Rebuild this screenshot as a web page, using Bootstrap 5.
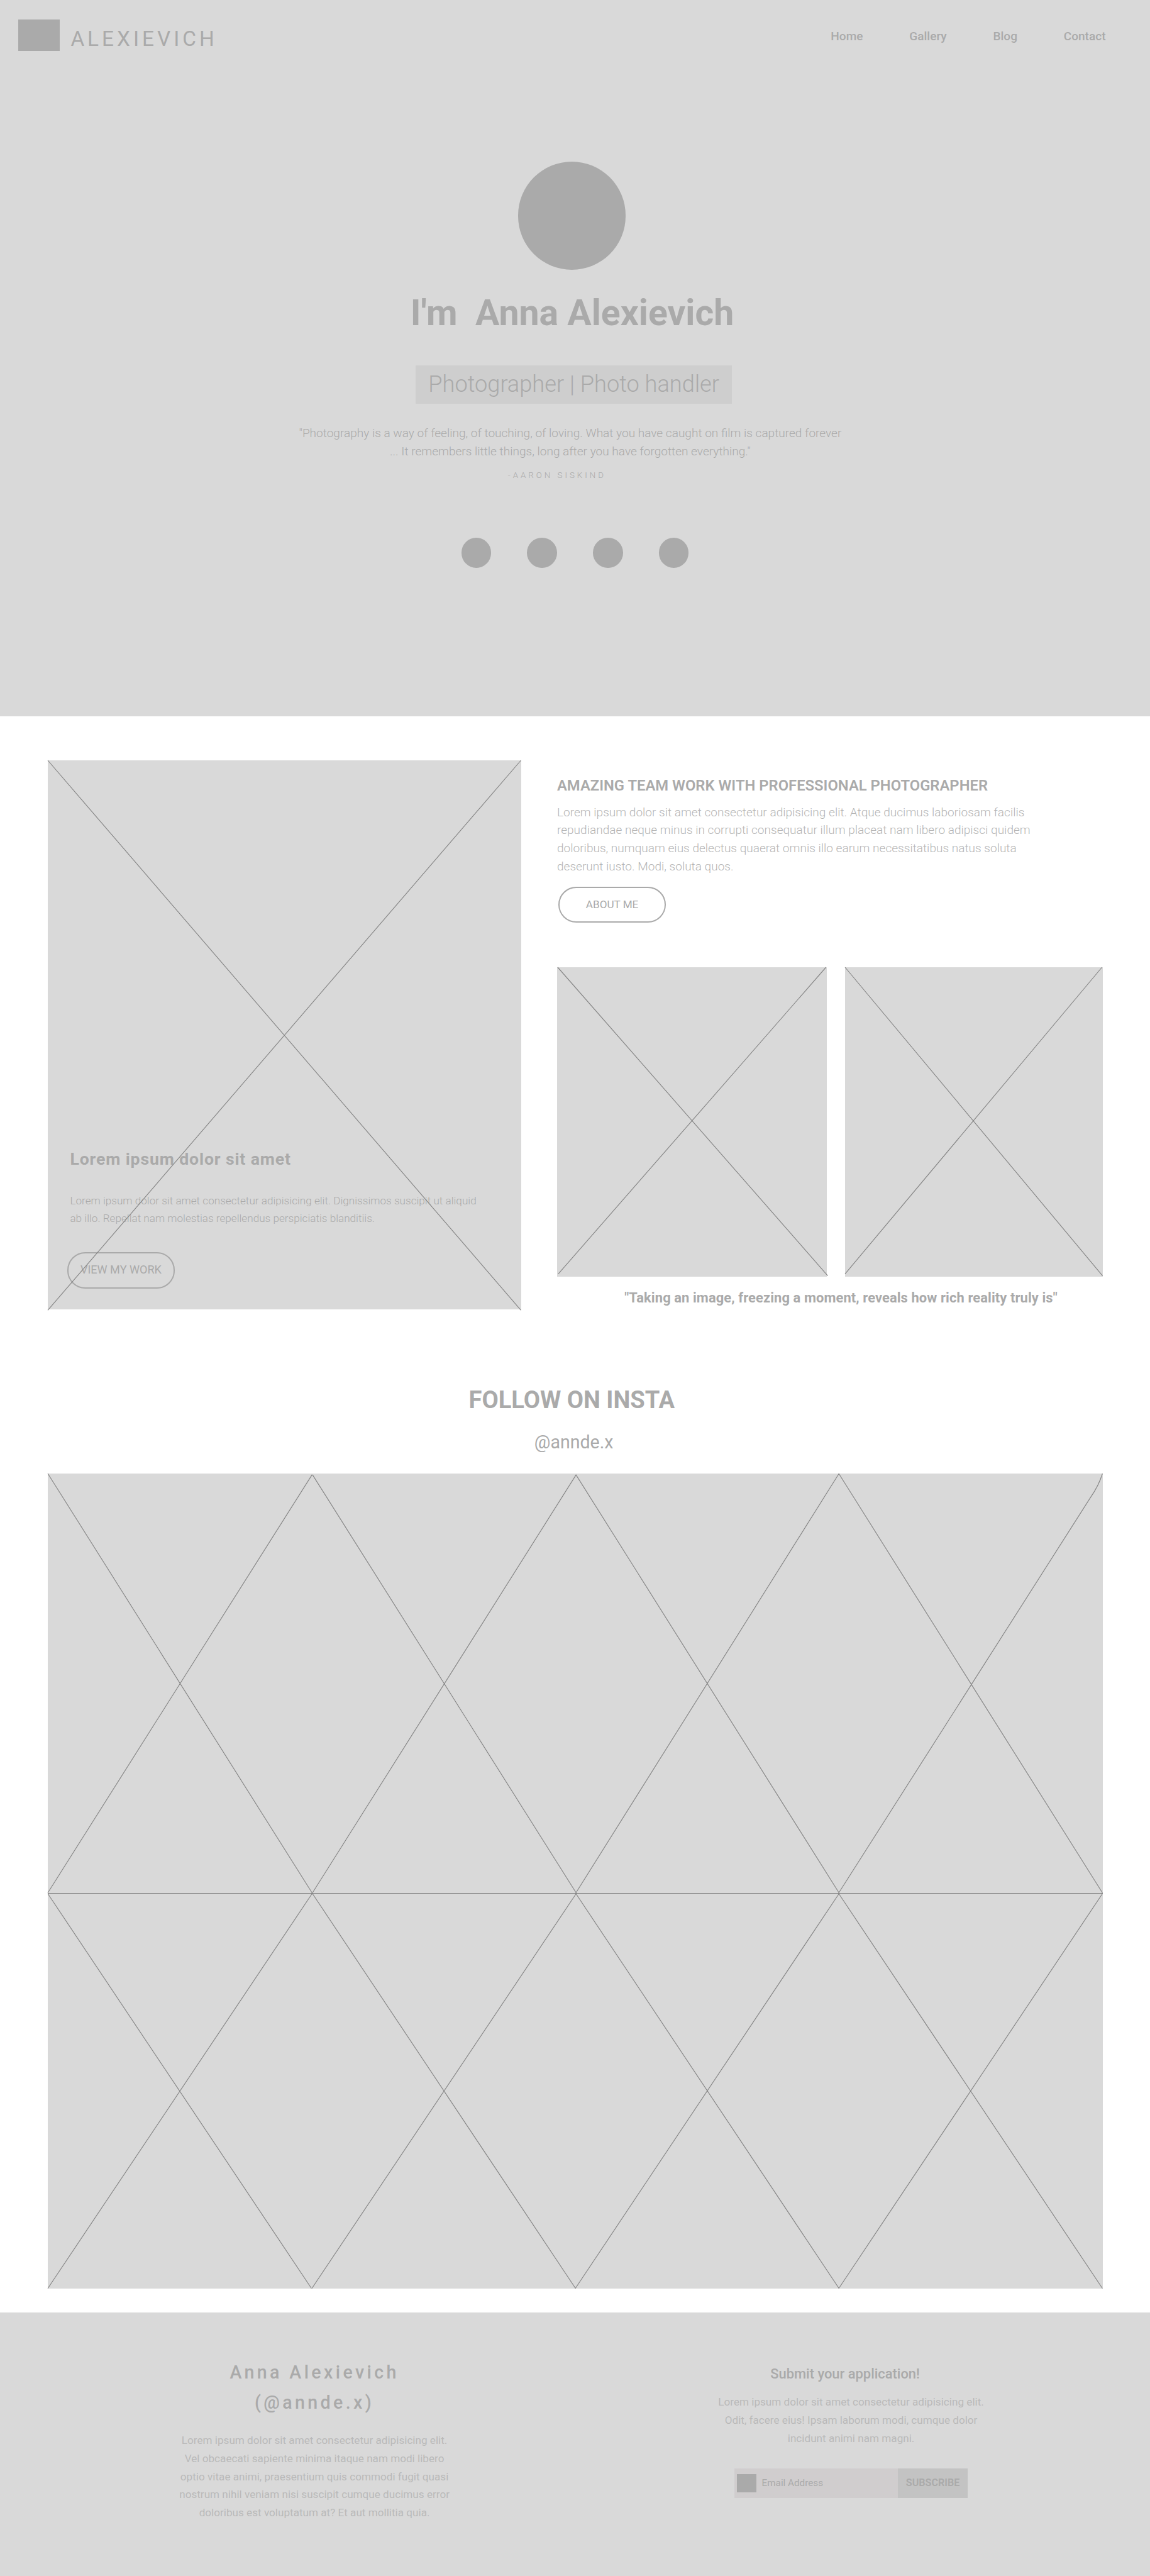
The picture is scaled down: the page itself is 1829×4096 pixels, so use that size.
<!DOCTYPE html>
<html lang="en">
<head>
<meta charset="utf-8">
<meta name="viewport" content="width=device-width, initial-scale=1">
<title>Anna Alexievich</title>
<link href="https://cdn.jsdelivr.net/npm/bootstrap@5.3.0/dist/css/bootstrap.min.css" rel="stylesheet">
<style>
  /* 1rem = 10 design pixels */
  html { font-size: 9.5256px; }
  body { font-family: Roboto, "Liberation Sans", sans-serif; color: #aaa; background: #fff; font-size: 2rem; line-height: 3rem; overflow-x: hidden; }
  h1, h2, h3, h4, p { margin: 0; color: #aaa; }
  .fill { background: #d9d9d9; }
  .tone { background: #aaa; }
  .light { font-weight: 300; }
  .cross { display: block; width: 100%; height: 100%; overflow: visible; fill: none; stroke: #858585; stroke-width: 1.2; }

  .hero { height: 119.6rem; }
  .topbar { height: 27rem; padding: 3.3rem 7.4rem 0 3rem; }
  .logo-box { width: 7rem; height: 5.2rem; }
  .brand-name { font-size: 3.5rem; line-height: 4.2rem; letter-spacing: .15em; font-weight: 400; margin: 1.1rem 0 0 1.8rem; color: #aaa; }
  .topbar .nav { margin-top: 1.35rem; gap: 7.75rem; }
  .topbar .nav-link { padding: 0; color: #aaa; font-weight: 500; font-size: 2rem; line-height: 3rem; }
  .avatar { width: 18rem; height: 18rem; margin-right: 1rem; }
  .hero h1 { font-size: 6rem; line-height: 7rem; font-weight: 700; white-space: pre; margin: 3.85rem .95rem 0 0; }
  .role { width: 52.8rem; height: 6.5rem; font-size: 3.8rem; line-height: 6.2rem; background: #cecece; margin: 5.1rem .4rem 0 0; padding-top: .05rem; }
  .quote { margin: 3.45rem 1.6rem 0 0; }
  .author { font-size: 1.4rem; line-height: 2rem; letter-spacing: .42rem; margin: 1.4rem 6rem 0 0; }
  .socials { gap: 6rem; margin-top: 9.5rem; }
  .socials span { width: 5rem; height: 5rem; }

  .about { padding: 7.3rem 7.9rem 0 8rem; height: 99rem; }
  .feature { width: 79rem; height: 91.7rem; padding: 64.94rem 0 0 3.7rem; }
  .feature h2 { font-size: 2.8rem; line-height: 3.4rem; font-weight: 700; letter-spacing: .09rem; }
  .feature p { font-size: 1.8rem; margin-top: 3.65rem; }
  .pill { display: flex; align-items: center; justify-content: center; width: 18rem; height: 6.1rem; border: 2px solid #aaa; border-radius: 3rem; color: #aaa; text-decoration: none; }
  .pill-work { font-size: 1.9rem; margin: 4.1rem 0 0 -.5rem; }
  .pill-about { font-size: 1.8rem; margin: 1.85rem 0 0 .2rem; height: 6rem; }
  .side { width: 91.1rem; padding-top: 2.7rem; }
  .side h2 { font-size: 2.5rem; line-height: 3rem; font-weight: 600; }
  .side .copy { color: #b4b4b4; margin-top: 1.55rem; }
  .shots { margin-top: 7.5rem; gap: 3.1rem; height: 51.6rem; }
  .shot-a { width: 45rem; }
  .shot-b { width: 43rem; }
  .caption { font-size: 2.3rem; letter-spacing: .01rem; font-weight: 700; margin: 2.1rem 0 0 3.7rem; }

  .insta { padding: 12.9rem 7.9rem 0 8rem; height: 167.4rem; }
  .insta h2 { font-size: 4rem; line-height: 4.6rem; font-weight: 700; padding-right: 1.2rem; }
  .insta .handle { font-size: 3rem; line-height: 3.6rem; margin-top: 2.84rem; padding-right: .5rem; }
  .tiles { margin-top: 3.46rem; }
  .tiles-top { height: 70.1rem; border-bottom: 1.4px solid #808080; }
  .tiles-bottom { height: 65.9rem; }

  .site-footer { height: 44rem; color: #b9b9b9; font-size: 1.8rem; }
  .site-footer h3 { font-size: 3rem; line-height: 5rem; font-weight: 500; letter-spacing: .46rem; }
  .site-footer h4 { font-size: 2.3rem; line-height: 3rem; font-weight: 500; padding-right: 2rem; }
  .bio { width: 50rem; margin-left: 27.5rem; padding-top: 7.6rem; }
  .bio p, .signup p { color: #b9b9b9; }
  .bio p { margin-top: 2.3rem; }
  .signup { width: 48rem; margin-left: 40.6rem; padding-top: 8.8rem; }
  .signup p { margin-top: 1.7rem; }
  .subscribe { width: 39rem; height: 5rem; margin: 3.5rem auto 0; }
  .email-box { width: 27.3rem; background: #d0cdce; padding-left: .4rem; font-size: 1.6rem; color: #aaa; }
  .email-icon { width: 3.3rem; height: 3.1rem; margin-right: .9rem; }
  .subscribe-btn { width: 11.7rem; background: #c3c3c3; color: #aaa; font-size: 1.7rem; font-weight: 600; border: 0; border-radius: 0; padding: 0 0 .2rem 0; line-height: 2rem; }
</style>
</head>
<body>
<header class="hero fill d-flex flex-column align-items-center text-center">
  <div class="topbar w-100 d-flex justify-content-between align-items-start">
    <a class="d-flex align-items-start text-decoration-none" href="#"><span class="logo-box tone"></span><span class="brand-name">ALEXIEVICH</span></a>
    <nav class="nav flex-nowrap">
      <a class="nav-link" href="#">Home</a>
      <a class="nav-link" href="#">Gallery</a>
      <a class="nav-link" href="#">Blog</a>
      <a class="nav-link" href="#">Contact</a>
    </nav>
  </div>
  <div class="avatar tone rounded-circle flex-shrink-0"></div>
  <h1>I'm  Anna Alexievich</h1>
  <div class="role light">Photographer | Photo handler</div>
  <p class="quote light">"Photography is a way of feeling, of touching, of loving. What you have caught on film is captured forever<br>... It remembers little things, long after you have forgotten everything."</p>
  <p class="author light">-AARON SISKIND</p>
  <div class="socials d-flex">
    <span class="tone rounded-circle"></span><span class="tone rounded-circle"></span><span class="tone rounded-circle"></span><span class="tone rounded-circle"></span>
  </div>
</header>

<section class="about d-flex justify-content-between align-items-start">
  <div class="feature fill position-relative">
    <h2>Lorem ipsum dolor sit amet</h2>
    <p class="light">Lorem ipsum dolor sit amet consectetur adipisicing elit. Dignissimos suscipit ut aliquid<br>ab illo. Repellat nam molestias repellendus perspiciatis blanditiis.</p>
    <a class="pill pill-work" href="#">VIEW MY WORK</a>
    <svg class="cross position-absolute top-0 start-0 pe-none" viewBox="0 0 790 917" preserveAspectRatio="none"><path d="M0 0L790 918M790 0L0 918"/></svg>
  </div>
  <div class="side">
    <h2>AMAZING TEAM WORK WITH PROFESSIONAL PHOTOGRAPHER</h2>
    <p class="copy light">Lorem ipsum dolor sit amet consectetur adipisicing elit. Atque ducimus laboriosam facilis<br>repudiandae neque minus in corrupti consequatur illum placeat nam libero adipisci quidem<br>doloribus, numquam eius delectus quaerat omnis illo earum necessitatibus natus soluta<br>deserunt iusto. Modi, soluta quos.</p>
    <a class="pill pill-about" href="#">ABOUT ME</a>
    <div class="shots d-flex">
      <div class="shot-a fill"><svg class="cross" viewBox="0 0 450 516" preserveAspectRatio="none"><path d="M1 0L452 515M449 0L2 512"/></svg></div>
      <div class="shot-b fill"><svg class="cross" viewBox="0 0 430 516" preserveAspectRatio="none"><path d="M0 0L430 515M429 0L0 512"/></svg></div>
    </div>
    <p class="caption text-center">"Taking an image, freezing a moment, reveals how rich reality truly is"</p>
  </div>
</section>

<section class="insta text-center">
  <h2>FOLLOW ON INSTA</h2>
  <p class="handle">@annde.x</p>
  <div class="tiles fill">
    <div class="tiles-top row g-0">
      <div class="col h-100"><svg class="cross" viewBox="0 0 440 700" preserveAspectRatio="none"><path d="M0 0L441 700M441 2L0 700"/></svg></div>
      <div class="col h-100"><svg class="cross" viewBox="0 0 440 700" preserveAspectRatio="none"><path d="M1 2L441 700M441 2L1 700"/></svg></div>
      <div class="col h-100"><svg class="cross" viewBox="0 0 440 700" preserveAspectRatio="none"><path d="M1 2L440 700M440 0L1 700"/></svg></div>
      <div class="col h-100"><svg class="cross" viewBox="0 0 440 700" preserveAspectRatio="none"><path d="M0 0L440 700M440 0Q434 20 420 40L0 700"/></svg></div>
    </div>
    <div class="tiles-bottom row g-0">
      <div class="col h-100"><svg class="cross" viewBox="0 0 440 660" preserveAspectRatio="none"><path d="M0 0L440 660M441 0L0 660"/></svg></div>
      <div class="col h-100"><svg class="cross" viewBox="0 0 440 660" preserveAspectRatio="none"><path d="M1 0L440 660M441 0L0 660"/></svg></div>
      <div class="col h-100"><svg class="cross" viewBox="0 0 440 660" preserveAspectRatio="none"><path d="M1 0L440 660M440 0L0 660"/></svg></div>
      <div class="col h-100"><svg class="cross" viewBox="0 0 440 660" preserveAspectRatio="none"><path d="M0 0L440 660M440 0L0 660"/></svg></div>
    </div>
  </div>
</section>

<footer class="site-footer fill d-flex align-items-start text-center">
  <div class="bio">
    <h3>Anna Alexievich<br>(@annde.x)</h3>
    <p>Lorem ipsum dolor sit amet consectetur adipisicing elit.<br>Vel obcaecati sapiente minima itaque nam modi libero<br>optio vitae animi, praesentium quis commodi fugit quasi<br>nostrum nihil veniam nisi suscipit cumque ducimus error<br>doloribus est voluptatum at? Et aut mollitia quia.</p>
  </div>
  <div class="signup">
    <h4>Submit your application!</h4>
    <p>Lorem ipsum dolor sit amet consectetur adipisicing elit.<br>Odit, facere eius! Ipsam laborum modi, cumque dolor<br>incidunt animi nam magni.</p>
    <div class="subscribe d-flex">
      <div class="email-box d-flex align-items-center"><span class="email-icon tone"></span><span>Email Address</span></div>
      <button class="btn subscribe-btn" type="button">SUBSCRIBE</button>
    </div>
  </div>
</footer>
<script src="https://cdn.jsdelivr.net/npm/bootstrap@5.3.0/dist/js/bootstrap.bundle.min.js"></script>
</body>
</html>
